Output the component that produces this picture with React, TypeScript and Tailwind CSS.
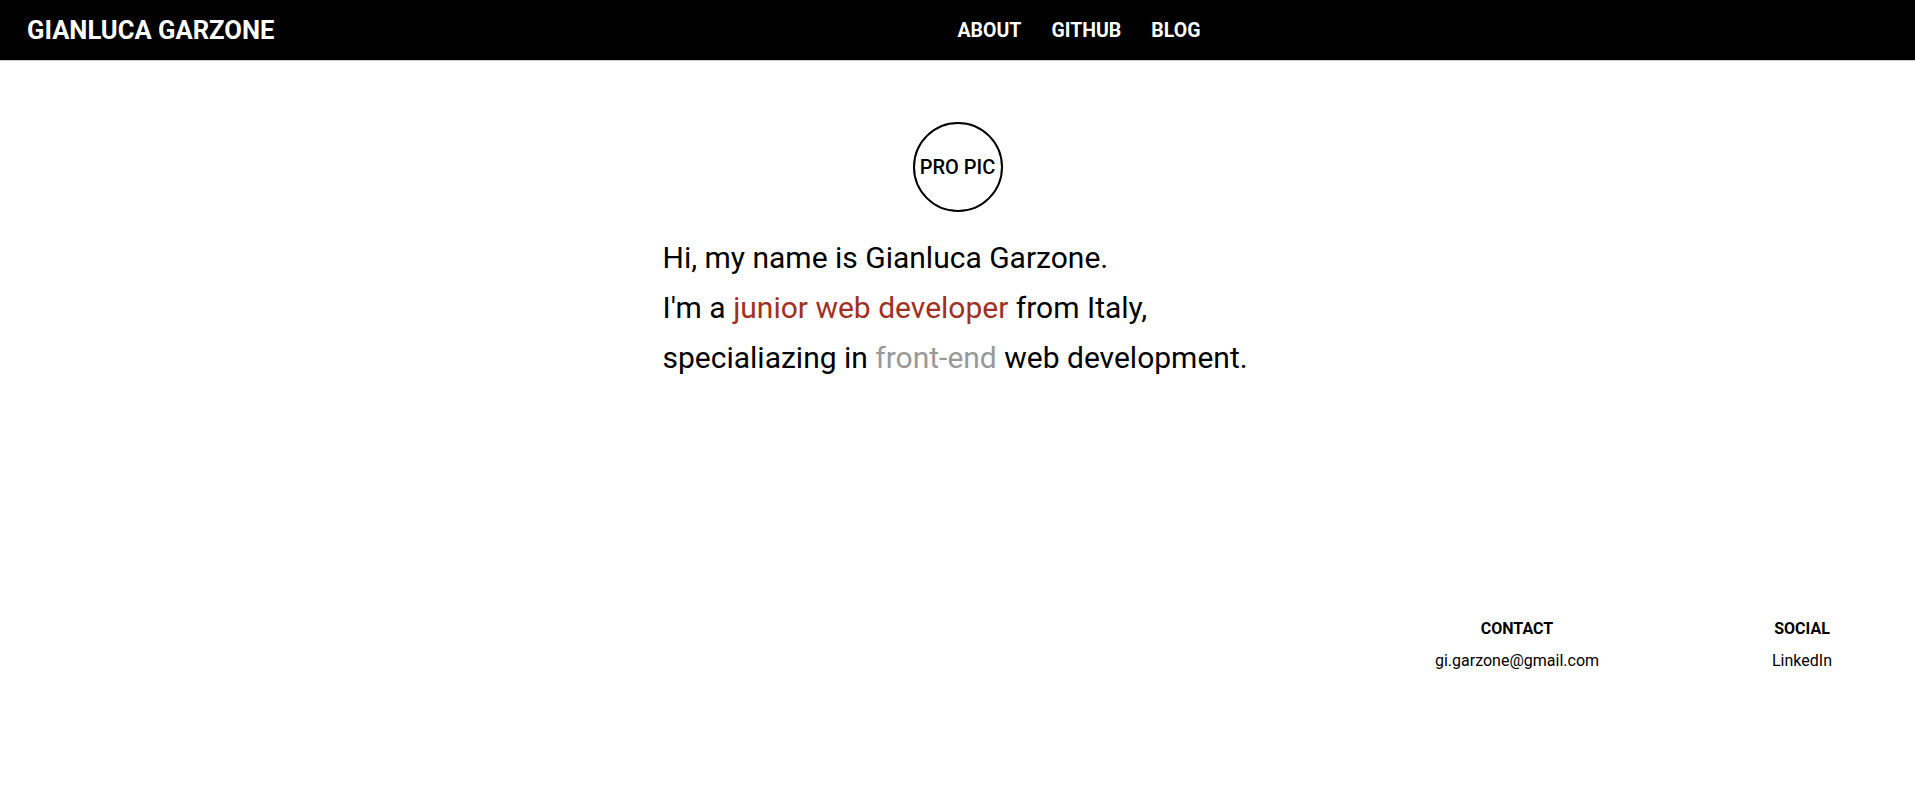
const navLinks = ["ABOUT", "GITHUB", "BLOG"];

const FooterColumn = ({ title, item }: { title: string; item: string }) => (
  <div className="flex w-[226px] flex-col items-center">
    <h4 className="text-[16px] font-bold leading-[20px]">{title}</h4>
    <p className="mt-[10px] text-[16px] leading-[24px]">{item}</p>
  </div>
);

export default function App() {
  return (
    <div className="min-h-[787px] bg-white font-['Roboto',sans-serif] text-black">
      <header className="grid h-[61px] grid-cols-2 border-b border-[#cccccc] bg-black pt-[2px] text-white">
        <div className="flex items-center pl-[27px]">
          <span className="text-[25.6px] font-bold leading-none">GIANLUCA GARZONE</span>
        </div>
        <nav className="flex items-center gap-[30px]">
          {navLinks.map((link) => (
            <a key={link} href="#" className="text-[19.5px] font-bold leading-none">
              {link}
            </a>
          ))}
        </nav>
      </header>

      <main className="flex flex-col items-center">
        <div className="mt-[61px] flex h-[90px] w-[90px] items-center justify-center rounded-full border-2 border-black">
          <span className="text-[20px] font-medium">PRO PIC</span>
        </div>
        <div className="mt-[21px] w-[590px] text-[30px] leading-[50px]">
          <p>Hi, my name is Gianluca Garzone.</p>
          <p>
            I'm a <span className="text-[#a0301f]">junior web developer</span> from Italy,
          </p>
          <p>
            specialiazing in <span className="text-[#999999]">front-end</span> web development.
          </p>
        </div>
      </main>

      <footer className="mt-[236px] flex justify-end gap-[59px]">
        <FooterColumn title="CONTACT" item="gi.garzone@gmail.com" />
        <FooterColumn title="SOCIAL" item="LinkedIn" />
      </footer>
    </div>
  );
}
